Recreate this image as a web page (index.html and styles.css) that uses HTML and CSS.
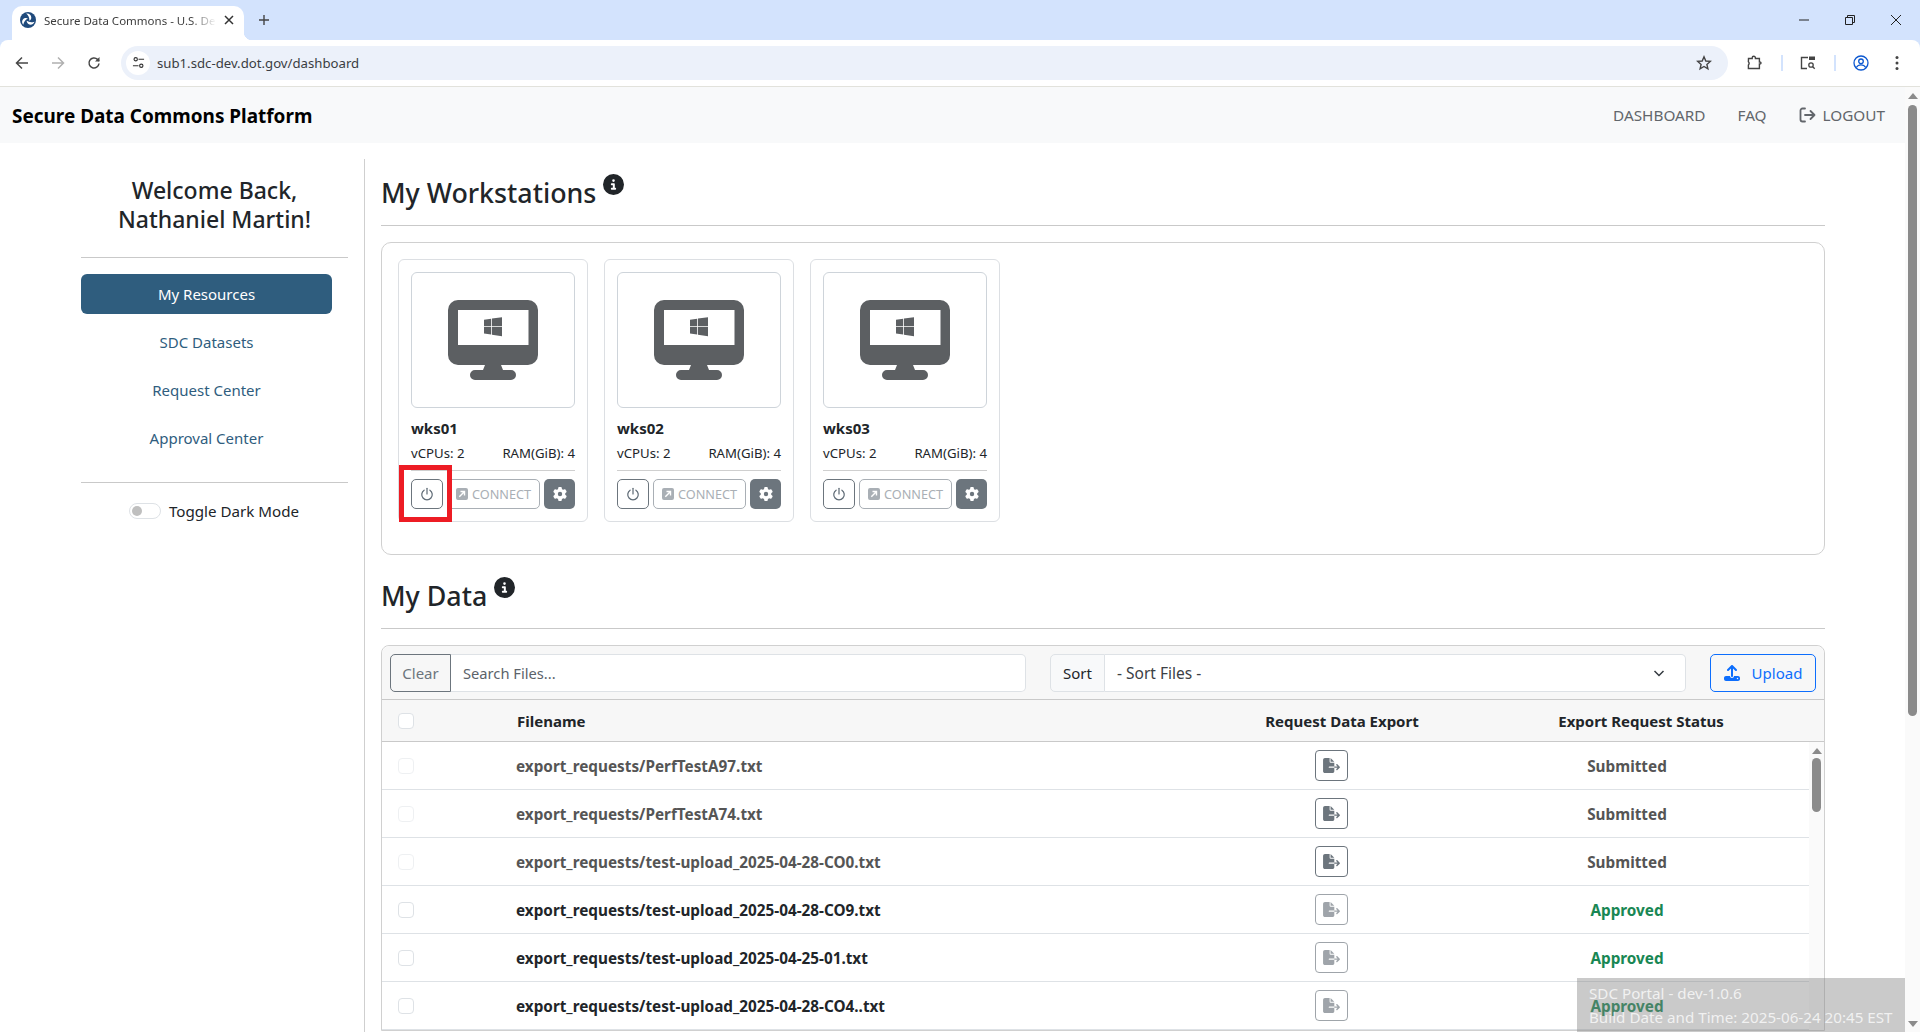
FILE: index.html
```html
<!DOCTYPE html>
<html lang="en">
<head>
<meta charset="utf-8">
<title>Secure Data Commons - U.S. Department of Transportation</title>
<link rel="stylesheet" href="styles.css">
</head>
<body>
<svg class="defs" width="0" height="0" aria-hidden="true">
  <symbol id="i-info" viewBox="0 0 512 512"><path d="M256 512A256 256 0 1 0 256 0a256 256 0 1 0 0 512zM216 336h24V272H216c-13.3 0-24-10.7-24-24s10.7-24 24-24h48c13.3 0 24 10.7 24 24v88h8c13.3 0 24 10.7 24 24s-10.7 24-24 24H216c-13.3 0-24-10.7-24-24s10.7-24 24-24zm40-208a32 32 0 1 1 0 64 32 32 0 1 1 0-64z"/></symbol>
  <symbol id="i-gear" viewBox="0 0 512 512"><path d="M495.9 166.6c3.2 8.7 .5 18.4-6.4 24.6l-43.3 39.4c1.1 8.3 1.7 16.8 1.7 25.4s-.6 17.1-1.7 25.4l43.3 39.4c6.9 6.2 9.6 15.9 6.4 24.6c-4.4 11.9-9.7 23.3-15.8 34.3l-4.7 8.1c-6.6 11-14 21.4-22.1 31.2c-5.9 7.2-15.7 9.6-24.5 6.8l-55.7-17.7c-13.4 10.3-28.2 18.9-44 25.4l-12.5 57.1c-2 9.1-9 16.3-18.2 17.8c-13.8 2.3-28 3.5-42.5 3.5s-28.7-1.2-42.5-3.5c-9.2-1.5-16.2-8.7-18.2-17.8l-12.5-57.1c-15.8-6.5-30.6-15.1-44-25.4L83.1 425.9c-8.8 2.8-18.6 .3-24.5-6.8c-8.1-9.8-15.5-20.2-22.1-31.2l-4.7-8.1c-6.1-11-11.4-22.4-15.8-34.3c-3.2-8.7-.5-18.4 6.4-24.6l43.3-39.4C64.6 273.1 64 264.6 64 256s.6-17.1 1.7-25.4L22.4 191.2c-6.9-6.2-9.6-15.9-6.4-24.6c4.4-11.9 9.7-23.3 15.8-34.3l4.7-8.1c6.6-11 14-21.4 22.1-31.2c5.9-7.2 15.7-9.6 24.5-6.8l55.7 17.7c13.4-10.3 28.2-18.9 44-25.4l12.5-57.1c2-9.1 9-16.3 18.2-17.8C227.3 1.2 241.5 0 256 0s28.7 1.2 42.5 3.5c9.2 1.5 16.2 8.7 18.2 17.8l12.5 57.1c15.8 6.5 30.6 15.1 44 25.4l55.7-17.7c8.8-2.8 18.6-.3 24.5 6.8c8.1 9.8 15.5 20.2 22.1 31.2l4.7 8.1c6.1 11 11.4 22.4 15.8 34.3zM256 336a80 80 0 1 0 0-160 80 80 0 1 0 0 160z"/></symbol>
  <symbol id="i-desktop" viewBox="0 0 90 80"><path fill-rule="evenodd" d="M10 0h70a10 10 0 0 1 10 10v45a10 10 0 0 1-10 10H53l2 5h8a5 5 0 0 1 0 10H27a5 5 0 0 1 0-10h8l2-5H10A10 10 0 0 1 0 55V10A10 10 0 0 1 10 0zM10 10v35h70.500V10z" fill="#5c5f62"/><path d="M36 19.800l7.200-1v7.500H36zM44 18.600l10-1.400v9.100H44zM36 27.100h7.200v7.500l-7.200-1zM44 27.100h10v9.100l-10-1.400z" fill="#5c5f62"/></symbol>
  <symbol id="i-power" viewBox="0 0 16 16"><path d="M8 1.500v6.500" fill="none" stroke="currentColor" stroke-width="1.400" stroke-linecap="round"/><path d="M4.700 3.600a6 6 0 1 0 6.600 0" fill="none" stroke="currentColor" stroke-width="1.400" stroke-linecap="round"/></symbol>
  <symbol id="i-connect" viewBox="0 0 12 12"><path fill-rule="evenodd" d="M2 0h8a2 2 0 0 1 2 2v8a2 2 0 0 1-2 2H2a2 2 0 0 1-2-2V2a2 2 0 0 1 2-2zm2.500 2.800v1.400h2.300L2.800 8.200l1 1 4-4v2.300h1.400V2.800z"/></symbol>
  <symbol id="i-export" viewBox="0 0 576 512"><path d="M0 64C0 28.700 28.700 0 64 0H224V128c0 17.700 14.300 32 32 32H384V288H216c-13.300 0-24 10.700-24 24s10.700 24 24 24H384V448c0 35.300-28.700 64-64 64H64c-35.300 0-64-28.700-64-64V64zM384 336V288H494.100l-39-39c-9.400-9.400-9.400-24.600 0-33.900s24.600-9.400 33.900 0l80 80c9.400 9.400 9.400 24.600 0 33.900l-80 80c-9.400 9.400-24.600 9.400-33.900 0s-9.400-24.600 0-33.900l39-39H384zm0-208H256V0L384 128z"/></symbol>
  <symbol id="i-upload" viewBox="0 0 512 512"><path d="M288 109.300V352c0 17.700-14.300 32-32 32s-32-14.300-32-32V109.300l-73.400 73.400c-12.500 12.500-32.800 12.500-45.300 0s-12.500-32.800 0-45.300l128-128c12.500-12.500 32.800-12.500 45.300 0l128 128c12.500 12.500 12.500 32.800 0 45.300s-32.800 12.500-45.300 0L288 109.300zM64 352H192c0 35.300 28.700 64 64 64s64-28.700 64-64H448c35.300 0 64 28.700 64 64v32c0 35.300-28.700 64-64 64H64c-35.300 0-64-28.700-64-64V416c0-35.300 28.700-64 64-64zM432 456a24 24 0 1 0 0-48 24 24 0 1 0 0 48z"/></symbol>
</svg>

<div class="chrome">
  <div class="tabstrip">
    <div class="tab">
      <svg class="favicon" viewBox="0 0 16 16"><circle cx="8" cy="8" r="8" fill="#1f4a7c"/><g fill="#fff"><path d="M6.200 1.500c3-.4 5.200 1.500 5.100 4.200-.1 1.300-.7 2.300-1.900 3C9.600 6 8.400 3.400 6.200 1.500z"/><path transform="rotate(120 8 8)" d="M6.200 1.500c3-.4 5.200 1.500 5.100 4.200-.1 1.300-.7 2.300-1.900 3C9.600 6 8.400 3.400 6.200 1.500z"/><path transform="rotate(240 8 8)" d="M6.200 1.500c3-.4 5.200 1.500 5.100 4.200-.1 1.300-.7 2.300-1.900 3C9.600 6 8.400 3.400 6.200 1.500z"/></g></svg>
      <span class="tab-title">Secure Data Commons - U.S. Department of Transportation</span>
      <svg class="tab-x" viewBox="0 0 10 10"><path d="M1 1l8 8M9 1l-8 8" stroke="#333" stroke-width="1.500"/></svg>
    </div>
    <svg class="tab-new" viewBox="0 0 12 12"><path d="M6 1v10M1 6h10" stroke="#444" stroke-width="1.400"/></svg>
    <div class="win-btns">
      <svg viewBox="0 0 12 12"><path d="M1 6h10" stroke="#222" stroke-width="1"/></svg>
      <svg viewBox="0 0 12 12"><path d="M1.500 3.500h7v7h-7zM3.500 3.500V1.500h7v7H8.500" fill="none" stroke="#222" stroke-width="1"/></svg>
      <svg viewBox="0 0 12 12"><path d="M1 1l10 10M11 1L1 11" stroke="#222" stroke-width="1"/></svg>
    </div>
  </div>

  <div class="toolbar">
    <svg class="tb-ico" viewBox="0 0 14 14"><path d="M13 7H2M7 1.500L1.500 7 7 12.500" fill="none" stroke="#474747" stroke-width="1.500"/></svg>
    <svg class="tb-ico tb-fwd" viewBox="0 0 14 14"><path d="M1 7h11M7 1.500L12.500 7 7 12.500" fill="none" stroke="#b0b0b0" stroke-width="1.500"/></svg>
    <svg class="tb-ico tb-reload" viewBox="0 0 14 14"><path d="M12 7.500A5 5 0 1 1 10.500 3.400L12 5" fill="none" stroke="#474747" stroke-width="1.500"/><path d="M12.500 1v4.500H8z" fill="#474747"/></svg>
    <div class="omnibox">
      <span class="site-ico"><svg viewBox="0 0 14 14"><circle cx="4" cy="3.500" r="1.800" fill="none" stroke="#333" stroke-width="1.200"/><path d="M7 3.500h6M1 10.500h6" stroke="#333" stroke-width="1.200"/><circle cx="10" cy="10.500" r="1.800" fill="none" stroke="#333" stroke-width="1.200"/></svg></span>
      <span class="url">sub1.sdc-dev.dot.gov/dashboard</span>
      <svg class="star" viewBox="0 0 16 16"><path d="M8 1.800l1.800 4.200 4.500.4-3.400 3 1 4.400L8 11.500l-3.900 2.300 1-4.400-3.400-3 4.500-.4z" fill="none" stroke="#444" stroke-width="1.400"/></svg>
    </div>
    <div class="tb-right">
      <svg viewBox="0 0 16 16"><path d="M1.500 3.500h3.700V2.800a1.600 1.600 0 0 1 3.200 0v.7h4v3.600h1a1 1 0 0 1 0 1.800h-1v4.600h-11v-3.500a2.200 2.200 0 0 0 0-3.300z" fill="none" stroke="#444" stroke-width="1.400"/></svg>
      <span class="tb-sep"></span>
      <svg viewBox="0 0 16 16"><path d="M7 13.500H1.500v-11H8" fill="none" stroke="#444" stroke-width="1.400"/><rect x="9" y="1.500" width="6" height="3.500" fill="#444"/><circle cx="11" cy="10" r="2.200" fill="none" stroke="#444" stroke-width="1.300"/><path d="M12.700 11.700l2 2" stroke="#444" stroke-width="1.300"/></svg>
      <span class="tb-sep"></span>
      <svg viewBox="0 0 16 16"><circle cx="8" cy="8" r="7" fill="none" stroke="#0b57d0" stroke-width="1.300"/><circle cx="8" cy="6.300" r="2.300" fill="none" stroke="#0b57d0" stroke-width="1.300"/><path d="M3.300 12.500c1.200-2 2.800-2.600 4.700-2.600s3.500.6 4.700 2.600" fill="none" stroke="#0b57d0" stroke-width="1.300"/></svg>
      <svg class="tb-dots" viewBox="0 0 4 16"><circle cx="2" cy="2.500" r="1.500" fill="#444"/><circle cx="2" cy="8" r="1.500" fill="#444"/><circle cx="2" cy="13.500" r="1.500" fill="#444"/></svg>
    </div>
  </div>
</div>

<div class="viewport">
  <div class="page">
    <nav class="navbar">
      <span class="brand">Secure Data Commons Platform</span>
      <div class="nav-links">
        <a>DASHBOARD</a>
        <a>FAQ</a>
        <a class="logout"><svg viewBox="0 0 17 16"><path d="M6 1.500H3.500A2 2 0 0 0 1.500 3.500v9a2 2 0 0 0 2 2H6" fill="none" stroke="currentColor" stroke-width="1.800" stroke-linecap="round"/><path d="M6 8h9.500M11.500 4l4 4-4 4" fill="none" stroke="currentColor" stroke-width="1.800" stroke-linecap="round" stroke-linejoin="round"/></svg>LOGOUT</a>
      </div>
    </nav>

    <div class="layout">
      <aside class="sidebar">
        <div class="welcome">Welcome Back,<br>Nathaniel Martin!</div>
        <hr class="rule side-rule-a">
        <ul class="side-nav">
          <li class="active">My Resources</li>
          <li>SDC Datasets</li>
          <li>Request Center</li>
          <li>Approval Center</li>
        </ul>
        <hr class="rule side-rule-b">
        <div class="toggle-row"><span class="switch"><span class="knob"></span></span>Toggle Dark Mode</div>
      </aside>

      <main class="main">
        <h2 class="section-title">My Workstations<svg class="info"><use href="#i-info"/></svg></h2>
        <hr class="rule">
        <section class="ws-panel">
          <article class="ws-card">
            <div class="ws-image"><svg class="desktop"><use href="#i-desktop"/></svg></div>
            <div class="ws-name">wks01</div>
            <div class="ws-specs"><span>vCPUs: 2</span><span>RAM(GiB): 4</span></div>
            <div class="ws-actions">
              <button class="btn-power"><svg><use href="#i-power"/></svg></button>
              <button class="btn-connect"><svg><use href="#i-connect"/></svg>CONNECT</button>
              <button class="btn-gear"><svg><use href="#i-gear"/></svg></button>
            </div>
            <span class="annotation"></span>
          </article>
          <article class="ws-card">
            <div class="ws-image"><svg class="desktop"><use href="#i-desktop"/></svg></div>
            <div class="ws-name">wks02</div>
            <div class="ws-specs"><span>vCPUs: 2</span><span>RAM(GiB): 4</span></div>
            <div class="ws-actions">
              <button class="btn-power"><svg><use href="#i-power"/></svg></button>
              <button class="btn-connect"><svg><use href="#i-connect"/></svg>CONNECT</button>
              <button class="btn-gear"><svg><use href="#i-gear"/></svg></button>
            </div>
          </article>
          <article class="ws-card">
            <div class="ws-image"><svg class="desktop"><use href="#i-desktop"/></svg></div>
            <div class="ws-name">wks03</div>
            <div class="ws-specs"><span>vCPUs: 2</span><span>RAM(GiB): 4</span></div>
            <div class="ws-actions">
              <button class="btn-power"><svg><use href="#i-power"/></svg></button>
              <button class="btn-connect"><svg><use href="#i-connect"/></svg>CONNECT</button>
              <button class="btn-gear"><svg><use href="#i-gear"/></svg></button>
            </div>
          </article>
        </section>

        <h2 class="section-title data-title">My Data<svg class="info"><use href="#i-info"/></svg></h2>
        <hr class="rule">
        <section class="data-panel">
          <div class="data-tools">
            <div class="search-group">
              <button class="btn-clear">Clear</button>
              <div class="search-input">Search Files...</div>
            </div>
            <div class="sort-group">
              <span class="sort-label">Sort</span>
              <div class="sort-select">- Sort Files -<svg viewBox="0 0 12 12"><path d="M1.500 4l4.500 4.500L10.500 4" fill="none" stroke="#343a40" stroke-width="1.500"/></svg></div>
            </div>
            <button class="btn-upload"><svg><use href="#i-upload"/></svg>Upload</button>
          </div>
          <div class="data-head">
            <span class="check"></span>
            <span class="head-name">Filename</span>
            <span class="head-cell">Request Data Export</span>
            <span class="head-cell">Export Request Status</span>
          </div>
          <div class="data-scroll">
            <div class="data-rows">
              <div class="row pending"><span class="check"></span><span class="fname">export_requests/PerfTestA97.txt</span><span class="cell"><button class="btn-export"><svg><use href="#i-export"/></svg></button></span><span class="status">Submitted</span></div>
              <div class="row pending"><span class="check"></span><span class="fname">export_requests/PerfTestA74.txt</span><span class="cell"><button class="btn-export"><svg><use href="#i-export"/></svg></button></span><span class="status">Submitted</span></div>
              <div class="row pending"><span class="check"></span><span class="fname">export_requests/test-upload_2025-04-28-CO0.txt</span><span class="cell"><button class="btn-export"><svg><use href="#i-export"/></svg></button></span><span class="status">Submitted</span></div>
              <div class="row approved"><span class="check"></span><span class="fname">export_requests/test-upload_2025-04-28-CO9.txt</span><span class="cell"><button class="btn-export"><svg><use href="#i-export"/></svg></button></span><span class="status">Approved</span></div>
              <div class="row approved"><span class="check"></span><span class="fname">export_requests/test-upload_2025-04-25-01.txt</span><span class="cell"><button class="btn-export"><svg><use href="#i-export"/></svg></button></span><span class="status">Approved</span></div>
              <div class="row approved"><span class="check"></span><span class="fname">export_requests/test-upload_2025-04-28-CO4..txt</span><span class="cell"><button class="btn-export"><svg><use href="#i-export"/></svg></button></span><span class="status">Approved</span></div>
            </div>
            <div class="mini-scroll"><span class="sb-up"></span><span class="mini-thumb"></span></div>
          </div>
        </section>
      </main>
    </div>
    <div class="build-badge">SDC Portal - dev-1.0.6<br>Build Date and Time: 2025-06-24 20:45 EST</div>
  </div>
  <div class="page-scroll"><span class="sb-up"></span><span class="page-thumb"></span><span class="sb-down"></span></div>
</div>
</body>
</html>
```

FILE: styles.css
```css
* { box-sizing: border-box; }
html, body { margin: 0; height: 100%; }
body {
  height: 1032px;
  overflow: hidden;
  display: flex;
  flex-direction: column;
  background: #fff;
  color: #212529;
  font-family: "Noto Sans", "Open Sans", "Liberation Sans", sans-serif;
  font-size: 15px;
}
.defs { position: absolute; }
button { font-family: inherit; background: none; padding: 0; margin: 0; }

/* browser chrome */
.chrome { flex: none; background: #d3e3fd; }
.tabstrip { height: 40px; display: flex; align-items: flex-end; padding-left: 12px; position: relative; }
.tab { width: 232px; height: 34px; background: #fff; border-radius: 10px 10px 0 0; display: flex; align-items: center; padding: 0 10px 6px 8px; gap: 8px; position: relative; z-index: 1; }
.tab::after { content: ""; position: absolute; right: -8px; bottom: 0; width: 8px; height: 8px; background: radial-gradient(circle at 100% 0, transparent 8px, #fff 8.500px); }
.favicon { width: 16px; height: 16px; flex: none; }
.tab-title { flex: 1; overflow: hidden; white-space: nowrap; font-size: 11.500px; color: #3c3c3c; -webkit-mask-image: linear-gradient(90deg, #000 85%, transparent); mask-image: linear-gradient(90deg, #000 85%, transparent); }
.tab-x { width: 10px; height: 10px; flex: none; }
.tab-new { width: 12px; height: 12px; margin: 0 0 14px 14px; }
.win-btns { position: absolute; right: 18px; top: 14px; display: flex; gap: 34px; }
.win-btns svg { width: 12px; height: 12px; }

.toolbar { height: 47px; background: #fff; border-bottom: 1px solid #e2e2dc; border-radius: 8px 8px 0 0; display: flex; align-items: center; padding: 0 0 1px 15px; }
.tb-ico { width: 14px; height: 14px; flex: none; }
.tb-fwd { margin-left: 22px; }
.tb-reload { margin-left: 22px; }
.omnibox { margin-left: 20px; width: 1607px; height: 34px; background: #ecf1fa; border-radius: 17px; display: flex; align-items: center; padding: 0 16px 0 5px; }
.site-ico { width: 24px; height: 24px; border-radius: 50%; background: #fff; display: flex; align-items: center; justify-content: center; flex: none; }
.site-ico svg { width: 13px; height: 13px; }
.url { margin-left: 7px; flex: 1; font-size: 13.200px; color: #3a3d42; }
.star { width: 16px; height: 16px; }
.tb-right { flex: 1; display: flex; align-items: center; padding-left: 19px; }
.tb-right svg { width: 16px; height: 16px; }
.tb-sep { width: 2px; height: 16px; background: #d3e3fd; margin: 0 17.500px; }
.tb-right .tb-dots { width: 4px; margin-left: 26px; }

/* page */
.viewport { flex: 1; min-height: 0; display: flex; }
.page { flex: 1; min-width: 0; position: relative; overflow: hidden; }
.page-scroll { width: 15px; flex: none; background: #fafafa; position: relative; display: flex; flex-direction: column; align-items: center; padding-top: 6px; }
.page-thumb { width: 9px; height: 611px; margin-top: 6px; border-radius: 5px; background: #8b8b8b; }
.sb-up, .sb-down { width: 0; height: 0; border-left: 5px solid transparent; border-right: 5px solid transparent; flex: none; }
.sb-up { border-bottom: 6px solid #8b8b8b; }
.sb-down { border-top: 6px solid #8b8b8b; margin-top: auto; margin-bottom: 5px; }

.navbar { height: 56px; background: #f8f9fa; display: flex; align-items: center; justify-content: space-between; padding: 0 20px 0 12px; }
.brand { font-size: 18.950px; font-weight: 700; color: #000; padding-top: 1px; }
.nav-links { display: flex; align-items: center; gap: 32px; font-size: 15.300px; color: #62666b; }
.logout { display: flex; align-items: center; gap: 7px; }
.logout svg { width: 17px; height: 16px; }

.layout { display: flex; align-items: flex-start; padding-top: 16px; }
.sidebar { width: 365px; flex: none; height: 900px; padding: 17px 16px 0 81px; border-right: 1px solid #cfcfcf; }
.welcome { font-size: 23px; line-height: 28.800px; font-weight: 500; text-align: center; }
.rule { border: 0; border-top: 1px solid #c9c9c9; margin: 0; }
.side-rule-a { margin-top: 23px; }
.side-rule-b { margin-top: 24px; }
.side-nav { list-style: none; margin: 16px 16px 0 0; padding: 0; display: flex; flex-direction: column; gap: 8px; }
.side-nav li { height: 40px; display: flex; align-items: center; justify-content: center; color: #2f5d7e; border-radius: 6px; font-size: 15px; }
.side-nav .active { background: #2f5d7e; color: #fff; }
.toggle-row { display: flex; align-items: center; justify-content: center; gap: 8px; margin-top: 18px; padding-right: 1px; font-size: 15.150px; }
.switch { width: 32px; height: 16px; border: 1px solid #dee2e6; border-radius: 8px; display: flex; align-items: center; padding-left: 2px; }
.knob { width: 10px; height: 10px; border-radius: 50%; background: #bfbfbf; }

.main { flex: 1; min-width: 0; padding: 17px 80px 0 16px; }
.section-title { margin: 0 0 15px; height: 34px; font-size: 26.800px; line-height: 34px; font-weight: 500; display: flex; align-items: flex-start; }
.info { width: 21px; height: 21px; margin: -2px 0 0 7px; fill: #212529; }
.data-title { margin-top: 24px; }

.ws-panel { margin-top: 16px; height: 313px; border: 1px solid #d0d0d0; border-radius: 10px; padding: 16px; display: flex; gap: 16px; }
.ws-card { width: 190px; height: 263px; border: 1px solid #dcdfe3; border-radius: 6px; padding: 12px; position: relative; }
.ws-image { height: 136px; border: 1px solid #ced4da; border-radius: 6px; display: flex; align-items: center; justify-content: center; padding-bottom: 1px; }
.desktop { width: 90px; height: 80px; }
.ws-name { margin-top: 10px; height: 20px; line-height: 20px; font-size: 15px; font-weight: 700; }
.ws-specs { margin-top: 5px; height: 20px; line-height: 20px; display: flex; justify-content: space-between; font-size: 13.200px; }
.ws-actions { margin-top: 7px; border-top: 1px solid #cfcfcf; display: flex; gap: 4px; padding-top: 8px; }
.btn-power { width: 32px; height: 30px; border: 1px solid #6c757d; border-radius: 5px; color: #5f6b76; display: flex; align-items: center; justify-content: center; }
.btn-power svg { width: 14px; height: 14px; }
.btn-connect { width: 93px; height: 30px; border: 1px solid #a9afb5; border-radius: 5px; color: #a9afb5; font-size: 12.700px; display: flex; align-items: center; justify-content: center; gap: 4px; fill: #a9afb5; }
.btn-connect svg { width: 12px; height: 12px; }
.btn-gear { flex: 1; height: 30px; border: 0; border-radius: 5px; background: #6c757d; display: flex; align-items: center; justify-content: center; fill: #fff; }
.btn-gear svg { width: 14px; height: 14px; }
.annotation { position: absolute; left: 0; top: 205px; width: 53px; height: 57px; border: 5px solid #ed1c24; pointer-events: none; }

.data-panel { margin-top: 16px; border: 1px solid #d0d0d0; border-radius: 8px 8px 0 0; }
.data-tools { height: 54px; background: #f7f7f7; border-bottom: 1px solid #c9c9c9; display: flex; align-items: center; padding: 0 8px; border-radius: 8px 8px 0 0; }
.search-group { width: 636px; display: flex; height: 38px; }
.btn-clear { width: 61px; border: 1px solid #6c757d; border-radius: 5px 0 0 5px; color: #6c757d; font-size: 15px; }
.search-input { flex: 1; background: #fff; border: 1px solid #dee2e6; border-left: 0; border-radius: 0 5px 5px 0; display: flex; align-items: center; padding-left: 12px; color: #5c636a; font-size: 14.700px; }
.sort-group { margin-left: 24px; flex: 1; display: flex; height: 38px; }
.sort-label { width: 55px; display: flex; align-items: center; justify-content: center; border: 1px solid #dee2e6; border-radius: 5px 0 0 5px; background: #f8f9fa; font-size: 15px; }
.sort-select { flex: 1; border: 1px solid #dee2e6; border-left: 0; border-radius: 0 5px 5px 0; background: #fff; display: flex; align-items: center; justify-content: space-between; padding: 0 20px 0 12px; font-size: 15.500px; color: #3c4045; }
.sort-select svg { width: 12px; height: 12px; }
.btn-upload { margin-left: 24px; width: 106px; height: 38px; border: 1px solid #0d6efd; border-radius: 5px; color: #0d6efd; fill: #0d6efd; font-size: 15px; display: flex; align-items: center; justify-content: center; gap: 12px; }
.btn-upload svg { width: 16px; height: 16px; }

.data-head { height: 42px; background: #f7f7f7; border-bottom: 1px solid #c9c9c9; display: grid; grid-template-columns: 119px 1fr 232px 366px; align-items: center; padding-left: 16px; font-weight: 700; font-size: 15px; }
.head-cell { text-align: center; }
.check { width: 16px; height: 16px; background: #fff; border: 1px solid #dee2e6; border-radius: 4px; display: block; }
.data-scroll { display: flex; }
.data-rows { flex: 1; min-width: 0; }
.row { height: 48px; border-bottom: 1px solid #dee2e6; display: grid; grid-template-columns: 118px 1fr 227px 364px; align-items: center; padding-left: 16px; font-weight: 700; font-size: 15.300px; }
.row .cell { display: flex; justify-content: center; }
.fname, .status { padding-top: 1px; }
.status { text-align: center; }
.btn-export { width: 33px; height: 31px; border: 1px solid #6c757d; border-radius: 4px; display: flex; align-items: center; justify-content: center; fill: #6c757d; }
.btn-export svg { width: 17px; height: 15px; }
.pending { color: #555; }
.pending .check { opacity: .5; }
.approved .btn-export { opacity: .65; }
.approved .status { color: #198754; }
.mini-scroll { width: 15px; flex: none; display: flex; flex-direction: column; align-items: center; padding-top: 6px; background: #fafafa; }
.mini-thumb { width: 9px; height: 54px; margin-top: 4px; border-radius: 5px; background: #8b8b8b; }

.build-badge { position: absolute; right: 0; bottom: 0; width: 328px; height: 54px; padding: 3px 12px 0; background: rgba(128, 128, 128, .42); color: rgba(255, 255, 255, .75); font-size: 15.200px; line-height: 24px; white-space: nowrap; }
```
